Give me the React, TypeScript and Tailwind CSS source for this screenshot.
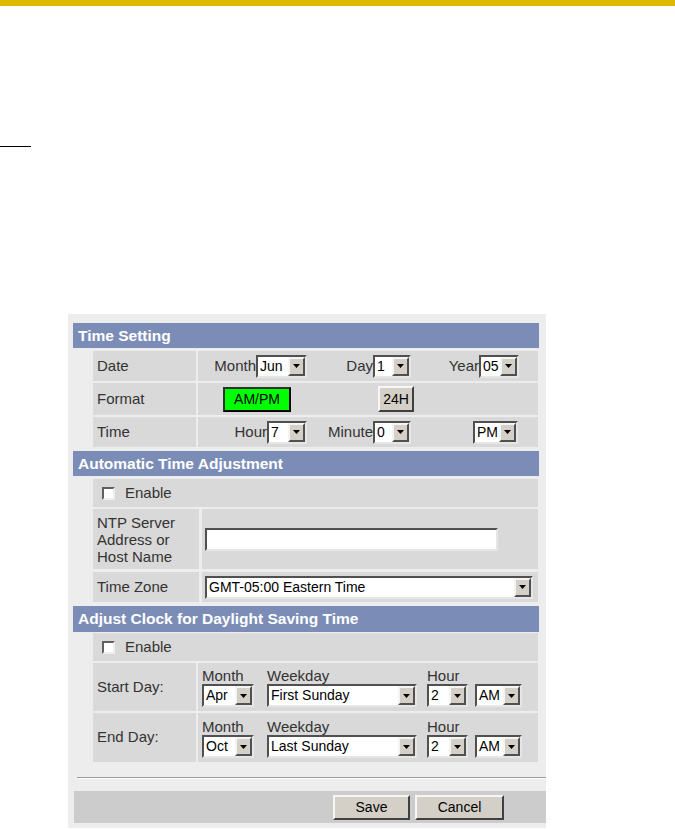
import React from 'react';

const FONT = { fontFamily: '"Liberation Sans", Arial, sans-serif' };

// windows-classic style dropdown
function Select({ value, w }: { value: string; w: string }) {
  return (
    <div
      className={`flex h-[23px] shrink-0 ${w} border-2 border-t-[#505050] border-l-[#505050] border-r-[#e6e6e6] border-b-[#e6e6e6] bg-white`}
    >
      <span className="flex-1 overflow-hidden whitespace-nowrap pl-[2px] text-[14px] leading-[19px] text-black">
        {value}
      </span>
      <span className="flex h-[19px] w-[17px] items-center justify-center border-2 border-t-[#f4f4f4] border-l-[#f4f4f4] border-r-[#505050] border-b-[#505050] bg-[#d4d0c8]">
        <svg width="7" height="4" viewBox="0 0 7 4">
          <path d="M0 0h7L3.5 4z" fill="#000" />
        </svg>
      </span>
    </div>
  );
}

function Checkbox() {
  return (
    <span className="inline-block h-[13px] w-[13px] border-2 border-t-[#606060] border-l-[#606060] border-r-[#eeeeee] border-b-[#eeeeee] bg-white"></span>
  );
}

function Header({ title, h }: { title: string; h: string }) {
  return (
    <div className={`flex ${h} w-[466px] items-center bg-[#7b8db7] pl-[5px] text-[15.5px] font-bold text-white`}>
      {title}
    </div>
  );
}

function Labeled({ label, children, w }: { label: string; children: React.ReactNode; w: string }) {
  return (
    <div className={`flex ${w} items-center justify-end`}>
      <span className="text-[15px] text-[#333]">{label}</span>
      {children}
    </div>
  );
}

export default function App() {
  return (
    <div className="relative h-[829px] w-[675px] overflow-hidden bg-white" style={FONT}>
      {/* top bar */}
      <div className="h-[6px] w-full bg-[#dfb800]"></div>
      <div className="mt-[140px] h-[1px] w-[31px] bg-black"></div>

      {/* settings panel */}
      <div className="ml-[68px] mt-[167px] w-[478px] bg-[#ededed] pb-[5px] pl-[5px] pt-[9px] text-[#333]">
        <Header title="Time Setting" h="h-[25px]" />
        <div className="ml-[20px] mt-[3px] flex w-[445px] flex-col gap-[2px]">
          <div className="flex h-[30px] gap-[2px]">
            <div className="flex w-[103px] items-center bg-[#d9d9d9] pl-[4px] text-[15px]">Date</div>
            <div className="flex flex-1 items-center bg-[#d9d9d9]">
              <Labeled label="Month" w="w-[109px]">
                <Select value="Jun" w="w-[51px]" />
              </Labeled>
              <Labeled label="Day" w="w-[104px]">
                <Select value="1" w="w-[38px]" />
              </Labeled>
              <Labeled label="Year" w="w-[108px]">
                <Select value="05" w="w-[40px]" />
              </Labeled>
            </div>
          </div>
          <div className="flex h-[32px] gap-[2px]">
            <div className="flex w-[103px] items-center bg-[#d9d9d9] pl-[4px] text-[15px]">Format</div>
            <div className="flex flex-1 items-center bg-[#d9d9d9] pl-[25px]">
              <button className="h-[25px] w-[68px] border-2 border-t-[#303030] border-l-[#303030] border-r-black border-b-black bg-[#00ff00] text-[14px] text-black">
                AM/PM
              </button>
              <button className="ml-[87px] h-[26px] w-[36px] border-2 border-t-[#f6f6f6] border-l-[#f6f6f6] border-r-[#404040] border-b-[#404040] bg-[#d4d0c8] text-[14px] text-black">
                24H
              </button>
            </div>
          </div>
          <div className="flex h-[30px] gap-[2px]">
            <div className="flex w-[103px] items-center bg-[#d9d9d9] pl-[4px] text-[15px]">Time</div>
            <div className="flex flex-1 items-center bg-[#d9d9d9]">
              <Labeled label="Hour" w="w-[109px]">
                <Select value="7" w="w-[40px]" />
              </Labeled>
              <Labeled label="Minute" w="w-[104px]">
                <Select value="0" w="w-[38px]" />
              </Labeled>
              <Labeled label="" w="w-[107px]">
                <Select value="PM" w="w-[45px]" />
              </Labeled>
            </div>
          </div>
        </div>

        <div className="mt-[4px]">
          <Header title="Automatic Time Adjustment" h="h-[25px]" />
        </div>
        <div className="ml-[20px] mt-[3px] flex w-[445px] flex-col">
          <div className="flex h-[28px] items-center gap-[10px] bg-[#d9d9d9] pl-[9px] text-[15px]">
            <Checkbox />
            <span>Enable</span>
          </div>
          <div className="mt-[2px] flex h-[60px] gap-[3px]">
            <div className="flex w-[106px] items-center bg-[#d9d9d9] pl-[4px] text-[15px] leading-[17px]">
              NTP Server
              <br />
              Address or
              <br />
              Host Name
            </div>
            <div className="flex flex-1 items-center bg-[#d9d9d9] pl-[3px]">
              <div className="h-[23px] w-[293px] border-2 border-t-[#505050] border-l-[#505050] border-r-[#e6e6e6] border-b-[#e6e6e6] bg-white"></div>
            </div>
          </div>
          <div className="mt-[3px] flex h-[30px] gap-[3px]">
            <div className="flex w-[106px] items-center bg-[#d9d9d9] pl-[4px] text-[15px]">Time Zone</div>
            <div className="flex flex-1 items-center bg-[#d9d9d9] pl-[3px]">
              <Select value="GMT-05:00 Eastern Time" w="w-[328px]" />
            </div>
          </div>
        </div>

        <div className="mt-[4px]">
          <Header title="Adjust Clock for Daylight Saving Time" h="h-[26px]" />
        </div>
        <div className="ml-[20px] mt-[1px] flex w-[445px] flex-col gap-[2px]">
          <div className="flex h-[28px] items-center gap-[10px] bg-[#d9d9d9] pl-[9px] text-[15px]">
            <Checkbox />
            <span>Enable</span>
          </div>
          {[
            { label: 'Start Day:', month: 'Apr', weekday: 'First Sunday', h: 'h-[48px]' },
            { label: 'End Day:', month: 'Oct', weekday: 'Last Sunday', h: 'h-[49px]' },
          ].map((r) => (
            <div key={r.label} className={`flex ${r.h} gap-[2px]`}>
              <div className="flex w-[103px] items-center bg-[#d9d9d9] pl-[4px] text-[15px]">{r.label}</div>
              <div className="flex flex-1 items-end bg-[#d9d9d9] pb-[4px] pl-[4px] text-[15px]">
                <div className="flex flex-col">
                  <span className="leading-[17px]">Month</span>
                  <Select value={r.month} w="w-[52px]" />
                </div>
                <div className="ml-[13px] flex flex-col">
                  <span className="leading-[17px]">Weekday</span>
                  <Select value={r.weekday} w="w-[150px]" />
                </div>
                <div className="ml-[10px] flex flex-col">
                  <span className="leading-[17px]">Hour</span>
                  <Select value="2" w="w-[41px]" />
                </div>
                <div className="ml-[7px]">
                  <Select value="AM" w="w-[47px]" />
                </div>
              </div>
            </div>
          ))}
        </div>

        <div className="ml-[4px] mt-[15px] w-[469px] border-t border-b border-t-[#9a9a9a] border-b-white"></div>

        <div className="ml-[1px] mt-[12px] flex h-[32px] w-[472px] items-center gap-[5px] bg-[#cccccc] pl-[259px]">
          <button className="h-[25px] w-[77px] border-2 border-t-[#f6f6f6] border-l-[#f6f6f6] border-r-[#404040] border-b-[#404040] bg-[#d4d0c8] text-[14px] text-black">
            Save
          </button>
          <button className="h-[25px] w-[89px] border-2 border-t-[#f6f6f6] border-l-[#f6f6f6] border-r-[#404040] border-b-[#404040] bg-[#d4d0c8] text-[14px] text-black">
            Cancel
          </button>
        </div>
      </div>
    </div>
  );
}
